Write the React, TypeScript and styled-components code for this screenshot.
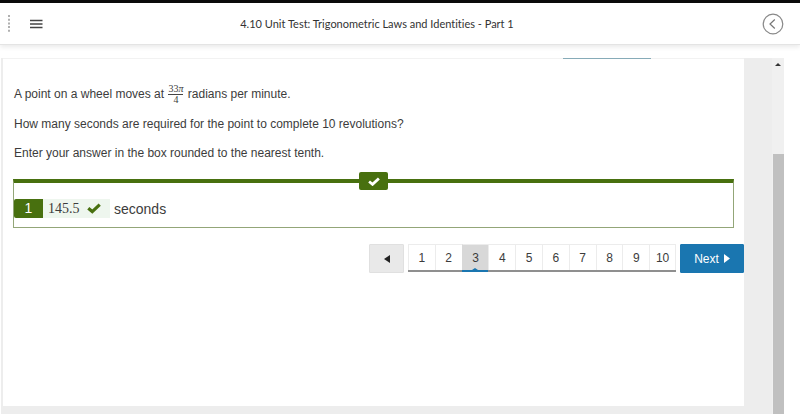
import React, { useState } from "react";
import styled, { createGlobalStyle } from "styled-components";

const green = "#48700f";
const blue = "#1a76b0";

const GlobalStyle = createGlobalStyle`
  *, *::before, *::after { box-sizing: border-box; }
  body { margin: 0; background: #fff; color: #3c3c3c; font-family: "Liberation Sans", Arial, sans-serif; }
  button, input { font: inherit; color: inherit; }
`;

const Page = styled.div`
  display: flex;
  flex-direction: column;
  min-height: 100vh;
  gap: 13px;
  padding-bottom: 1px;
`;

const Header = styled.header`
  display: grid;
  grid-template-columns: 46px 1fr 46px;
  align-items: center;
  height: 45px;
  border-top: 3px solid #0a0a0a;
  border-bottom: 1px solid #e4e4e4;
  box-shadow: 0 2px 5px rgba(0, 0, 0, 0.09);
`;

const HeaderStart = styled.div`
  display: flex;
  align-items: center;
  gap: 18px;
  padding-left: 7px;
`;

const IconButton = styled.button`
  display: flex;
  padding: 0;
  border: 0;
  background: none;
  cursor: pointer;
`;

const BackButton = styled(IconButton)`
  justify-self: end;
  margin-right: 16px;
`;

const Title = styled.h1`
  margin: 0;
  padding-right: 46px;
  text-align: center;
  font: 400 11px/18px Lato, sans-serif;
  font-variant-ligatures: none;
  color: #333;
`;

const Frame = styled.div`
  display: flex;
  flex: 1;
  margin: 0 16px 0 1px;
  padding-left: 2px;
  background: #ededed;
`;

const Content = styled.main`
  flex: 1;
  margin: 0 28px 8px 0;
  padding: 0 0 24px;
  border-top: 1px solid #f2f2f2;
  background: #fff;
`;

const FocusLine = styled.div`
  width: 88px;
  height: 1px;
  margin: -1px 93px 0 auto;
  background: #87abb8;
`;

const Question = styled.div`
  display: flex;
  flex-direction: column;
  gap: 9px;
  padding: 25px 11px 0;
`;

const Text = styled.p`
  margin: 0;
  font-size: 12px;
  line-height: 20px;
`;

const Fraction = styled.span`
  display: inline-flex;
  flex-direction: column;
  align-items: center;
  margin: 0 1px;
  vertical-align: middle;
  font: 10px/10px "Liberation Serif", serif;
`;

const Numerator = styled.span`
  border-bottom: 1px solid #444;
`;

const AnswerBox = styled.section`
  display: flex;
  flex-direction: column;
  margin: 16px 10px 0;
  padding-bottom: 9px;
  border: 1px solid #93a678;
  border-top: 4px solid ${green};
`;

const ResultTag = styled.div`
  display: flex;
  align-items: center;
  justify-content: center;
  align-self: center;
  width: 29px;
  height: 18px;
  margin: -11px 0 9px;
  border-radius: 2px;
  background: ${green};
`;

const AnswerRow = styled.div`
  display: flex;
  align-items: center;
  height: 19px;
  font-size: 14px;
`;

const Badge = styled.label`
  width: 29px;
  line-height: 19px;
  border-radius: 2px 0 0 2px;
  background: ${green};
  color: #fff;
  text-align: center;
`;

const Field = styled.div`
  display: flex;
  align-items: center;
  width: 67px;
  height: 19px;
  margin-right: 4px;
  padding-left: 5px;
  background: #eef6ee;
`;

const AnswerInput = styled.input`
  width: 39px;
  padding: 0;
  border: 0;
  outline: 0;
  background: transparent;
  font: 14px/19px "Liberation Serif", serif;
`;

const Pager = styled.nav`
  display: flex;
  justify-content: flex-end;
  gap: 4px;
  margin-top: 16px;
`;

const StepButton = styled.button<{ $primary?: boolean }>`
  display: flex;
  align-items: center;
  justify-content: center;
  gap: 5px;
  width: ${(p) => (p.$primary ? 64 : 35)}px;
  height: 29px;
  padding: 0;
  border: 1px solid ${(p) => (p.$primary ? blue : "#e0e0e0")};
  border-radius: 1px;
  background: ${(p) => (p.$primary ? blue : "#e9e9e9")};
  color: ${(p) => (p.$primary ? "#fff" : "#222")};
  font-size: 12px;
  cursor: pointer;
`;

const PageList = styled.div`
  display: grid;
  grid-template-columns: repeat(10, 1fr);
  width: 268px;
  height: 28px;
  border-bottom: 2px solid #8f8f8f;
`;

const PageButton = styled.button<{ $active: boolean }>`
  position: relative;
  padding: 0;
  border: 0;
  border-top: 1px solid #ececec;
  border-left: 1px solid ${(p) => (p.$active ? "#d8d8d8" : "#ececec")};
  background: ${(p) => (p.$active ? "#d8d8d8" : "#fff")};
  font-size: 12px;
  cursor: pointer;

  &:last-child {
    border-right: 1px solid #ececec;
  }

  &::before,
  &::after {
    content: "";
    display: ${(p) => (p.$active ? "block" : "none")};
    position: absolute;
  }

  &::before {
    left: -1px;
    right: 0;
    bottom: -2px;
    height: 2px;
    background: ${blue};
  }

  &::after {
    bottom: 0;
    left: 50%;
    margin-left: -3px;
    border: 3px solid transparent;
    border-top: 0;
    border-bottom: 2px solid ${blue};
  }
`;

const Scrollbar = styled.div`
  display: flex;
  flex-direction: column;
  align-items: center;
  width: 12px;
  background: #f0f0f0;
`;

const ScrollTrack = styled.div`
  display: flex;
  justify-content: center;
  flex: 91;
  padding-top: 5px;
`;

const ScrollThumb = styled.div`
  flex: 260;
  width: 11px;
  background: #c0c0c0;
`;

const Check = ({ width, color }: { width: number; color: string }) => (
  <svg width={width} height={(width * 10) / 13} viewBox="0 0 13 10" aria-hidden="true">
    <path d="M1.2 4.9 4.9 8 11.8 1.5" fill="none" stroke={color} strokeWidth="3" />
  </svg>
);

export default function App() {
  const [page, setPage] = useState(3);
  const [answer, setAnswer] = useState("145.5");

  return (
    <>
      <GlobalStyle />
      <Page>
        <Header>
          <HeaderStart>
            <svg width="4" height="17" viewBox="0 0 4 17" aria-hidden="true">
              <path d="M2 0V17" stroke="#b0b0b0" strokeWidth="2" strokeDasharray="2 1.7" />
            </svg>
            <IconButton aria-label="Menu">
              <svg width="14" height="10" viewBox="0 0 14 10">
                <path d="M1 1.5H13.5M1 5H13.5M1 8.5H13.5" stroke="#444" strokeWidth="1.4" />
              </svg>
            </IconButton>
          </HeaderStart>
          <Title>4.10 Unit Test: Trigonometric Laws and Identities - Part 1</Title>
          <BackButton aria-label="Back">
            <svg width="22" height="22" viewBox="0 0 22 22" fill="none">
              <circle cx="11" cy="11" r="9.8" stroke="#888" strokeWidth="1.2" />
              <path d="M12.8 6.5 8 11l4.8 4.5" stroke="#777" strokeWidth="1.2" />
            </svg>
          </BackButton>
        </Header>
        <Frame>
          <Content>
            <FocusLine />
            <Question>
              <Text>
                A point on a wheel moves at{" "}
                <Fraction>
                  <Numerator>33<i>π</i></Numerator>
                  <span>4</span>
                </Fraction>{" "}
                radians per minute.
              </Text>
              <Text>How many seconds are required for the point to complete 10 revolutions?</Text>
              <Text>Enter your answer in the box rounded to the nearest tenth.</Text>
            </Question>
            <AnswerBox aria-label="Answer">
              <ResultTag><Check width={12} color="#fff" /></ResultTag>
              <AnswerRow>
                <Badge htmlFor="answer">1</Badge>
                <Field>
                  <AnswerInput id="answer" value={answer} onChange={(e) => setAnswer(e.target.value)} />
                  <Check width={14} color={green} />
                </Field>
                <span>seconds</span>
              </AnswerRow>
            </AnswerBox>
            <Pager aria-label="Questions">
              <StepButton aria-label="Previous" onClick={() => setPage(Math.max(1, page - 1))}>
                <svg width="6" height="8" viewBox="0 0 6 8"><path d="M6 0V8L0 4Z" fill="currentColor" /></svg>
              </StepButton>
              <PageList>
                {Array.from({ length: 10 }, (_, i) => i + 1).map((n) => (
                  <PageButton key={n} $active={n === page} onClick={() => setPage(n)}>{n}</PageButton>
                ))}
              </PageList>
              <StepButton $primary onClick={() => setPage(Math.min(10, page + 1))}>
                Next
                <svg width="6" height="9" viewBox="0 0 6 9"><path d="M0 0V9L6 4.5Z" fill="currentColor" /></svg>
              </StepButton>
            </Pager>
          </Content>
          <Scrollbar aria-hidden="true">
            <ScrollTrack>
              <svg width="6" height="3" viewBox="0 0 6 3"><path d="M0 3H6L3 0Z" fill="#333" /></svg>
            </ScrollTrack>
            <ScrollThumb />
          </Scrollbar>
        </Frame>
      </Page>
    </>
  );
}
